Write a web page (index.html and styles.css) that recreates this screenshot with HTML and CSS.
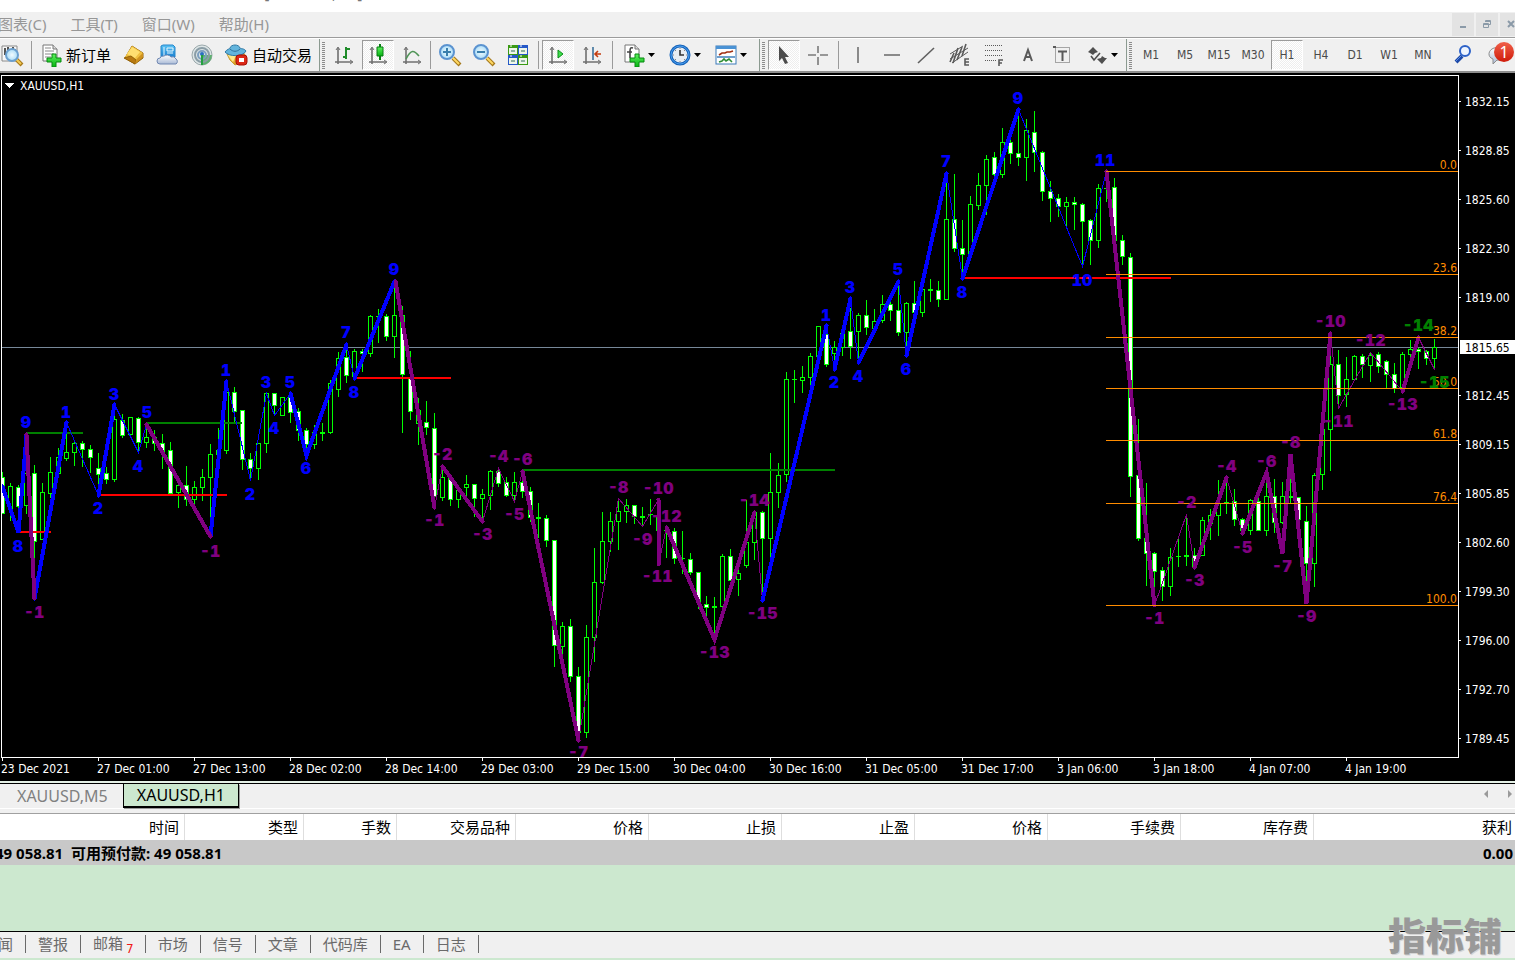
FILE: index.html
```html
<!DOCTYPE html>
<html lang="zh-CN">
<head>
<meta charset="utf-8">
<title>XAUUSD,H1</title>
<link rel="stylesheet" href="styles.css">
</head>
<body>
<svg class="defs" aria-hidden="true">
  <defs>
    <linearGradient id="gold" x1="0" y1="0" x2="1" y2="1"><stop offset="0" stop-color="#ffe98a"/><stop offset=".5" stop-color="#e9b437"/><stop offset="1" stop-color="#a86a08"/></linearGradient>
    <linearGradient id="sky" x1="0" y1="0" x2="0" y2="1"><stop offset="0" stop-color="#5cc4f5"/><stop offset="1" stop-color="#1a7fd0"/></linearGradient>
    <linearGradient id="cloud" x1="0" y1="0" x2="0" y2="1"><stop offset="0" stop-color="#ffffff"/><stop offset="1" stop-color="#a9bad6"/></linearGradient>
    <linearGradient id="green" x1="0" y1="0" x2="0" y2="1"><stop offset="0" stop-color="#5ef25e"/><stop offset="1" stop-color="#06b312"/></linearGradient>
    <radialGradient id="lens"><stop offset="0" stop-color="#f2fbff"/><stop offset="1" stop-color="#a9dcf7"/></radialGradient>
    <g id="axes" fill="none" stroke="#707070"><path d="M6 5v16M3 19h17" stroke-width="1.600"/><path d="M4 7l2-3 2 3M18 17l3 2-3 2"/></g>
    <path id="plus" d="M12 11h4v4h5v4h-5v5h-4v-5H7v-4h5z" fill="url(#green)" stroke="#078a10"/>
    <path id="caret" d="M0 0h7L3.500 4z" fill="#000"/>
  </defs>
</svg>

<header>
  <div class="caption">[XAUUSD,H1]</div>
  <nav class="menubar">
    <button>图表(C)</button><button>工具(T)</button><button>窗口(W)</button><button>帮助(H)</button>
    <div class="winbtns">
      <button aria-label="最小化"><svg width="10" height="10"><path d="M2 8h6" stroke="#8b9aa8" stroke-width="2"/></svg></button>
      <button aria-label="还原"><svg width="10" height="10" fill="none" stroke="#8b9aa8"><path d="M3.500 3V1.500h5v4H7M3.500 2.500h5M1.500 4.500h5v4h-5zM1.500 5.500h5"/></svg></button>
      <button aria-label="关闭"><svg width="10" height="10"><path d="M2 2l6 6M8 2L2 8" stroke="#8b9aa8" stroke-width="2"/></svg></button>
    </div>
  </nav>
</header>

<div class="toolbar" role="toolbar">
  <button class="tb first" aria-label="查找图表"><svg viewBox="0 0 24 24"><path d="M2 3h15v15H2z" fill="#f8f8f8" stroke="#8a8a8a"/><path d="M5 5v7M8 4v5M13 4v8M15 6v3" stroke="#555" stroke-width="2"/><path d="M16 16l6 6" stroke="#a97a1b" stroke-width="4"/><path d="M16 16l5 5" stroke="#f4cc55" stroke-width="2"/><circle cx="12" cy="12" r="6" fill="url(#lens)" stroke="#6ba0d0" stroke-width="2"/></svg></button>
  <i class="sep s1"></i>
  <button class="tb order"><svg viewBox="0 0 24 24"><path d="M3 2h10l4 4v12H3z" fill="#fff" stroke="#777"/><path d="M13 2v4h4" fill="#ddd" stroke="#777"/><path d="M5 5h6M5 8h9M5 11h9M5 14h6" stroke="#888"/><use href="#plus"/></svg>新订单</button>
  <button class="tb" aria-label="市场"><svg viewBox="0 0 24 24"><path d="M3 15L10 3l11 7v5l-8 6z" fill="url(#gold)" stroke="#94640a"/><path d="M3 14L10 3l11 7-7 7-4-3z" fill="#f0c040"/><path d="M5 11l5-7 8 5-5 6z" fill="#ffdf70"/><path d="M2 15l7-2 5 4-1 4z" fill="#b97a12" stroke="#94640a"/><path d="M14 17l7-7v4l-8 7z" fill="#cf9220"/></svg></button>
  <button class="tb" aria-label="云主机"><svg viewBox="0 0 24 24"><path d="M5 3l2-1h10l2 2v10H5z" fill="url(#sky)" stroke="#2687cc"/><path d="M8 4v9M11 5h6v3h-6zM11 10h6" fill="none" stroke="#e6f7ff"/><path d="M4 21a3 3 0 0 1 0-6 4 4 0 0 1 4-2 5 5 0 0 1 7 1 4 4 0 0 1 5 2 3 3 0 0 1 0 5z" fill="url(#cloud)" stroke="#7188b2"/></svg></button>
  <button class="tb" aria-label="信号"><svg viewBox="0 0 24 24" fill="none"><circle cx="12" cy="12" r="10" fill="#dde5e6" stroke="#9aa8ab"/><path d="M12 12l10 0a10 10 0 0 1-9 10z" fill="#5fb070"/><circle cx="12" cy="12" r="7" stroke="#8a9da6" stroke-width="2"/><circle cx="12" cy="12" r="4" stroke="#7d9fc0" stroke-width="2"/><circle cx="12" cy="11" r="2" fill="#2b6fc0"/><path d="M12 12v10" stroke="#23a040" stroke-width="2"/></svg></button>
  <button class="tb auto"><svg viewBox="0 0 24 24"><path d="M3 11h18l-4 8-6 3-5-5z" fill="url(#gold)" stroke="#c99a2c"/><path d="M4 12h8l-3 7z" fill="#ffe98a"/><path d="M1 9c2-3 5-3 5-4 1-4 9-4 10 0 0 1 4 0 6 3-3 6-17 6-21 1z" fill="#62b4dc" stroke="#3079a5"/><path d="M6 6c3 3 7 3 10 0" fill="none" stroke="#2d6f99"/><rect x="12" y="12" width="11" height="10" rx="3" fill="#dc2816" stroke="#a80e04"/><rect x="15" y="15" width="5" height="4" fill="#fff"/></svg>自动交易</button>
  <i class="tail"></i>

  <button class="tb" aria-label="柱状图"><svg viewBox="0 0 24 24"><use href="#axes"/><path d="M14 4v12M14 6h4M11 14h3" stroke="#1f8c2a" stroke-width="2"/></svg></button>
  <button class="tb on" aria-label="蜡烛图"><svg viewBox="0 0 24 24"><use href="#axes"/><path d="M14 1v16" stroke="#067d12" stroke-width="2"/><path d="M11 4h6v9h-6z" fill="url(#green)" stroke="#067d12"/></svg></button>
  <button class="tb" aria-label="折线图"><svg viewBox="0 0 24 24"><use href="#axes"/><path d="M6 16c5-10 8-9 13-3" fill="none" stroke="#4f9456" stroke-width="1.600"/></svg></button>
  <i class="sep s2"></i>
  <button class="tb" aria-label="放大"><svg viewBox="0 0 24 24"><path d="M15 15l7 7" stroke="#a5791c" stroke-width="4"/><path d="M15 15l6 6" stroke="#ffd964" stroke-width="2"/><circle cx="9" cy="9" r="7" fill="url(#lens)" stroke="#5b93d0" stroke-width="2"/><path d="M9 5v8M5 9h8" stroke="#3a7fad" stroke-width="2"/></svg></button>
  <button class="tb" aria-label="缩小"><svg viewBox="0 0 24 24"><path d="M15 15l7 7" stroke="#a5791c" stroke-width="4"/><path d="M15 15l6 6" stroke="#ffd964" stroke-width="2"/><circle cx="9" cy="9" r="7" fill="url(#lens)" stroke="#5b93d0" stroke-width="2"/><path d="M5 9h8" stroke="#3a7fad" stroke-width="2"/></svg></button>
  <button class="tb" aria-label="平铺窗口"><svg viewBox="0 0 24 24"><path d="M2 2h10v10H2zM12 12h10v10H12z" fill="#3a9a14"/><path d="M12 2h10v10H12zM2 12h10v10H2z" fill="#2559c8"/><path d="M3 5h8v6H3zM13 5h8v6h-8zM3 15h8v6H3zM13 15h8v6h-8z" fill="#eef6ea"/><path d="M4 3h2M14 3h2M4 13h2M14 13h2" stroke="#fff"/><path d="M5 8h4M15 8h4M5 18h4M15 18h4" stroke="#8fb0a0" stroke-width="2"/></svg></button>
  <i class="sep s3"></i>
  <button class="tb on" aria-label="自动滚动"><svg viewBox="0 0 24 24"><use href="#axes"/><path d="M12 7l5 4-5 4z" fill="#3de04b" stroke="#0a8c18"/></svg></button>
  <button class="tb" aria-label="图表平移"><svg viewBox="0 0 24 24"><use href="#axes"/><path d="M13 4v13" stroke="#3b719b" stroke-width="1.600"/><path d="M15 11h6M18 8l-3 3 3 3" fill="none" stroke="#c33c10" stroke-width="1.600"/></svg></button>
  <i class="sep s3"></i>
  <button class="tb drop" aria-label="指标"><svg viewBox="0 0 24 24"><path d="M3 2h10l4 4v13H3z" fill="#fff" stroke="#777"/><path d="M13 2v4h4" fill="#ddd" stroke="#777"/><path d="M11 5c-3-1-3 1-3 4v6M5 9h5" fill="none" stroke="#444" stroke-width="1.600"/><use href="#plus" x="1"/></svg><svg class="car" viewBox="0 0 7 4"><use href="#caret"/></svg></button>
  <button class="tb drop" aria-label="周期"><svg viewBox="0 0 24 24"><circle cx="12" cy="12" r="9" fill="#e8edf2" stroke="#1763b9" stroke-width="3"/><circle cx="12" cy="12" r="9" fill="none" stroke="#4a9ff0"/><path d="M12 7v5h4" fill="none" stroke="#333" stroke-width="1.600"/><path d="M12 5v1M12 18v1M5 12h1M18 12h1M7 7l1 1M17 7l-1 1M7 17l1-1M17 17l-1-1" stroke="#888"/></svg><svg class="car" viewBox="0 0 7 4"><use href="#caret"/></svg></button>
  <button class="tb drop" aria-label="模板"><svg viewBox="0 0 24 24"><rect x="2" y="3" width="20" height="18" fill="#fff" stroke="#3a7ab8"/><path d="M2 3h20v3H2z" fill="#4a92d4"/><path d="M3 14h18" stroke="#4a86be" stroke-width="1.600"/><path d="M5 12l3-2h3l2-1h3l3-1" fill="none" stroke="#a33113" stroke-width="1.600"/><path d="M5 19l3-1 2-2 2 2 3-2 3 3" fill="none" stroke="#2e8d35" stroke-width="1.600"/></svg><svg class="car" viewBox="0 0 7 4"><use href="#caret"/></svg></button>
  <i class="tail gap"></i>

  <button class="tb on" aria-label="光标"><svg viewBox="0 0 24 24"><path d="M7 3v15l3-3 3 6 3-1-3-6h4z" fill="#4c4c4c"/></svg></button>
  <button class="tb" aria-label="十字准线"><svg viewBox="0 0 24 24"><path d="M12 3v7M12 14v8M2 12h8M14 12h8" stroke="#7a7a7a" stroke-width="1.600"/></svg></button>
  <i class="sep s3"></i>
  <button class="tb" aria-label="垂直线"><svg viewBox="0 0 24 24"><path d="M12 4v16" stroke="#707070" stroke-width="1.600"/></svg></button>
  <button class="tb" aria-label="水平线"><svg viewBox="0 0 24 24"><path d="M4 12h16" stroke="#707070" stroke-width="1.600"/></svg></button>
  <button class="tb" aria-label="趋势线"><svg viewBox="0 0 24 24"><path d="M4 20L20 5" stroke="#606060" stroke-width="1.600"/></svg></button>
  <button class="tb" aria-label="等距通道"><svg viewBox="0 0 24 24" fill="none" stroke="#5a5a5a"><path d="M2 11L15 3M2 16L20 5M4 20L20 9"/><path d="M5 20l5-15M9 17l5-13M14 13l4-12M2 19l4-9" stroke-width="1.600"/><path d="M21 16h-4v6h4M17 19h4" stroke-width="1.600"/></svg></button>
  <button class="tb" aria-label="斐波那契"><svg viewBox="0 0 24 24" fill="none" stroke="#5a5a5a"><path d="M3 2.500h18M3 7.500h18M3 12.500h18M3 17.500h12" stroke-dasharray="1 1"/><path d="M21 17h-4v6M17 20h3" stroke-width="1.600"/></svg></button>
  <button class="tb" aria-label="文本"><svg viewBox="0 0 24 24"><path d="M8 18l4-11 4 11M9 14h6" fill="none" stroke="#5a5a5a" stroke-width="2"/></svg></button>
  <button class="tb" aria-label="文本标签"><svg viewBox="0 0 24 24" fill="none" stroke="#5a5a5a"><path d="M5.500 4.500h14v15h-14z" stroke-dasharray="1 1"/><path d="M3 3h3v2H3z" fill="#5a5a5a" stroke="none"/><path d="M8 8.500h9M12.500 8v10" stroke-width="2"/></svg></button>
  <button class="tb drop shapes" aria-label="箭头"><svg viewBox="0 0 24 24"><path d="M3 9l5-5 5 5-3 1-2 2-3-2zM12 16l4-1 1-2 3 2h2l-5 6z" fill="#4f4f4f"/><path d="M6 13l3 4 6-7" fill="none" stroke="#4f4f4f" stroke-width="1.600"/></svg><svg class="car" viewBox="0 0 7 4"><use href="#caret"/></svg></button>
  <i class="tail"></i>

  <button class="tb tf">M1</button><button class="tb tf">M5</button><button class="tb tf">M15</button><button class="tb tf">M30</button><button class="tb tf on">H1</button><button class="tb tf">H4</button><button class="tb tf">D1</button><button class="tb tf">W1</button><button class="tb tf">MN</button>
  <button class="tb search" aria-label="搜索"><svg viewBox="0 0 24 24"><path d="M11 13l-6 6" stroke="#1c49a8" stroke-width="4"/><path d="M10 13l-5 5" stroke="#5d8fe8"/><circle cx="14" cy="8" r="5" fill="#eef5ff" stroke="#2d62c8" stroke-width="2"/></svg></button>
  <button class="tb chat" aria-label="消息"><svg viewBox="0 0 24 24"><path d="M8 5c9-2 14 2 13 7-1 4-6 6-10 5l-4 4v-5c-6-2-5-9 1-11z" fill="url(#cloud)" stroke="#8d8d8d"/></svg><span class="count">1</span></button>
</div>

<main class="chart">
  <svg id="chart" viewBox="0 73 1515 708" role="img" aria-label="XAUUSD,H1"></svg>
</main>

<nav class="charttabs">
  <button>XAUUSD,M5</button><button class="active">XAUUSD,H1</button>
  <div class="scroll">
    <button aria-label="向左"><svg width="6" height="8"><path d="M5 0v8L1 4z" fill="#9a9a9a"/></svg></button>
    <button aria-label="向右"><svg width="6" height="8"><path d="M1 0v8l4-4z" fill="#9a9a9a"/></svg></button>
  </div>
</nav>

<section class="terminal">
  <table>
    <colgroup><col class="c185"><col class="c119"><col class="c93"><col class="c119"><col class="c133"><col class="c133"><col class="c133"><col class="c133"><col class="c133"><col class="c133"><col></colgroup>
    <thead><tr><th>时间</th><th>类型</th><th>手数</th><th>交易品种</th><th>价格</th><th>止损</th><th>止盈</th><th>价格</th><th>手续费</th><th>库存费</th><th>获利</th></tr></thead>
    <tbody><tr><td colspan="10"><span>49 058.81&nbsp; 可用预付款: 49 058.81</span></td><td class="profit">0.00</td></tr></tbody>
  </table>
</section>
<footer>
  <button>新闻</button><button>警报</button><button class="mail">邮箱<sub>7</sub></button><button>市场</button><button>信号</button><button>文章</button><button>代码库</button><button>EA</button><button>日志</button>
  <span class="brand">指标铺</span>
</footer>
<script src="chart.js"></script>
</body>
</html>
```
FILE: styles.css
```css
* { box-sizing: border-box; }
html, body { height: 100%; }
body {
  margin: 0;
  display: flex;
  flex-direction: column;
  background: #f0f0f0;
  font: 15px/20px "Noto Sans", "Noto Sans CJK SC", sans-serif;
  overflow-x: hidden;
}
button {
  margin: 0;
  padding: 0;
  border: 0;
  background: none;
  font: inherit;
  color: inherit;
  white-space: nowrap;
}
.defs { position: absolute; width: 0; height: 0; }

.caption {
  height: 12px;
  padding: 0 0 9px 264px;
  display: flex;
  align-items: flex-end;
  background: #fff;
  color: #777;
  font-size: 16px;
  overflow: hidden;
}

.menubar {
  height: 26px;
  padding-bottom: 1px;
  display: flex;
  align-items: center;
  gap: 24px;
  border-bottom: 1px solid #9c9c9c;
  color: #979797;
  overflow: hidden;
}
.menubar > button:first-child { margin-left: -2px; }
.winbtns { margin-left: auto; display: flex; gap: 2px; margin-right: -7px; }
.winbtns button {
  width: 22px;
  height: 23px;
  background: #e3e3e3;
  display: grid;
  place-items: center;
}

.toolbar {
  height: 35px;
  flex: none;
  display: flex;
  align-items: center;
  border-top: 1px solid #fff;
  border-bottom: 2px solid #8e8e8e;
  overflow: hidden;
}
.tb {
  flex: none;
  width: 34px;
  height: 32px;
  display: flex;
  align-items: center;
  justify-content: center;
  border: 1px solid transparent;
}
.tb svg { width: 24px; height: 24px; flex: none; }
.tb.first { width: 24px; }
.tb.order { width: 85px; justify-content: flex-start; padding-left: 7px; gap: 2px; }
.tb.auto { width: 100px; justify-content: flex-start; padding-left: 4px; gap: 4px; }
.tb.drop { width: 46px; justify-content: flex-start; padding-left: 6px; gap: 2px; }
.tb.shapes { width: 47px; padding-left: 5px; }
.tb svg.car { width: 7px; height: 4px; }
.tb.on {
  width: 32px;
  height: 30px;
  margin: 0 1px;
  border-color: #9a9a9a #fff #fff #9a9a9a;
  background: repeating-conic-gradient(#fff 0 25%, #eee 0 50%) 0 0 / 2px 2px;
}
.tb.tf { font-family: "DejaVu Sans Condensed", "DejaVu Sans", sans-serif; font-size: 12px; color: #4a4a4a; }
.sep { flex: none; height: 28px; width: 1px; background: #9a9a9a; }
.s1 { margin-left: 7px; }
.s2 { margin: 0 2px 0 1px; }
.s3 { margin: 0 2px 0 3px; }
.tail {
  flex: none;
  width: 8px;
  height: 32px;
  border-left: 1px solid #8b9a90;
  background: repeating-linear-gradient(#8c8c8c 0 1px, #f0f0f0 1px 2px) 2px 3px / 3px 27px no-repeat;
}
.tail.gap { margin-left: 6px; }
.tb.search { margin-left: 6px; }
.tb.chat { width: 35px; position: relative; }
.count {
  position: absolute;
  left: 13px;
  top: 2px;
  width: 20px;
  height: 20px;
  border-radius: 50%;
  background: linear-gradient(#f0604a, #cf1b0a);
  color: #fff;
  font: 16px/20px "Noto Sans", sans-serif;
  text-align: center;
}

.chart { background: #000; flex: none; }
.chart svg { display: block; width: 100%; height: auto; }
.chart text { font: 12px "DejaVu Sans Condensed", "DejaVu Sans", sans-serif; fill: #fff; }
.chart .fib { fill: #ff8c00; text-anchor: end; }
.chart .wave {
  font: 900 16px Inter, "DejaVu Sans", sans-serif;
  font-variant-numeric: tabular-nums;
  text-anchor: middle;
}
.chart .now { fill: #000; }

.charttabs {
  flex: none;
  height: 31px;
  margin-top: 2px;
  border-top: 1px solid #000;
  border-bottom: 1px solid #a0a0a0;
  box-shadow: inset 0 -4px #f0f0f0, inset 0 -5px #fff, 0 -2px #e4f0e6;
  display: flex;
  align-items: flex-start;
  color: #808080;
  font-size: 16px;
}
.charttabs > button { height: 24px; padding: 0 15px 0 17px; }
.charttabs > .active {
  padding: 0 13px;
  border: 1px solid #000;
  border-top: 0;
  border-bottom-width: 2px;
  background: #cce8cf;
  color: #000;
  box-shadow: 1px 1px #999;
}
.scroll { margin: 6px 2px 0 auto; display: flex; gap: 18px; }
.scroll button { display: flex; }

.terminal { flex: 1 0 90px; background: #cce8cf; overflow: hidden; }
table { width: 100%; table-layout: fixed; border-collapse: separate; border-spacing: 0; }
.c185 { width: 185px; } .c119 { width: 119px; } .c93 { width: 93px; } .c133 { width: 133px; }
th {
  height: 26px;
  padding: 0 5px;
  text-align: right;
  font-weight: 400;
  background: #fff;
  border-right: 1px solid #dedede;
}
th:last-child { border: 0; padding-right: 3px; }
td { height: 25px; padding: 0; background: #c8c8c8; font-weight: 700; white-space: nowrap; }
td span { margin-left: -5px; }
td.profit { text-align: right; padding-right: 2px; }

footer {
  flex: none;
  position: relative;
  height: 29px;
  padding-top: 3px;
  display: flex;
  align-items: flex-start;
  border-top: 1px solid #000;
  border-bottom: 2px solid #cce8cf;
  color: #6a6a6a;
}
footer button { height: 18px; line-height: 16px; padding: 0 12px; border-right: 1px solid #6a6a6a; }
footer button:first-child { margin-left: -29px; }
footer .mail { padding-right: 11px; }
footer sub { color: #f01818; font: 12px/12px "DejaVu Sans", sans-serif; margin-left: 3px; }
.brand {
  position: absolute;
  right: 13px;
  bottom: 4px;
  font: 900 38px/40px "Noto Sans CJK SC", sans-serif;
  color: #999;
  text-shadow: 1px 1px #d5d5d5;
}
```
FILE: chart.js
```js
// Each bar: [high, low, body top, body bottom, kind]; kind: 1 = falling, 0 = rising, 2 = flat
const bars = [
[472,513,477,513,1],[483,520,486,508,0],[485,510,487,506,1],[440,513,473,505,0],[465,557,473,541,1],[483,539,492,539,0],[457,497,472,493,0],[448,473,457,473,0],[433,460,452,458,0],[441,465,443,452,0],
[441,466,443,449,1],[445,472,449,457,1],[453,495,468,474,1],[467,483,473,479,1],[404,481,419,479,0],[414,437,420,435,1],[417,434,417,434,0],[417,452,418,442,1],[425,447,437,442,0],[430,450,437,443,1],
[434,468,443,452,1],[442,494,450,493,1],[483,507,485,492,0],[466,505,485,499,1],[481,505,487,499,0],[469,500,477,487,0],[444,536,454,477,0],[428,454,450,454,0],[381,453,392,450,0],[387,422,392,411,1],
[410,469,410,459,1],[453,479,459,468,1],[443,479,443,468,0],[393,452,393,443,0],[393,415,393,405,1],[397,415,397,415,0],[393,422,397,412,1],[408,440,411,430,1],[428,450,430,444,1],[425,448,432,444,0],
[423,440,432,433,2],[380,433,383,432,0],[352,396,358,389,0],[347,382,357,375,1],[349,376,351,376,0],[349,371,351,353,1],[315,356,316,353,0],[309,342,316,316,2],[314,340,316,336,1],[283,357,315,336,0],
[306,432,315,374,1],[351,419,378,411,1],[398,444,410,423,0],[401,434,422,427,1],[413,500,428,496,1],[465,500,477,497,0],[475,505,477,499,1],[490,507,490,499,0],[475,495,484,487,0],[484,516,484,498,1],
[489,518,494,498,0],[470,509,471,495,0],[468,486,471,483,1],[477,496,482,495,1],[472,500,482,495,0],[472,497,482,491,1],[487,521,491,517,1],[503,537,517,518,2],[515,546,518,540,1],[540,666,540,645,1],
[622,653,626,646,0],[619,681,626,676,1],[667,740,676,732,1],[625,737,637,732,0],[548,661,582,637,0],[512,583,541,582,0],[512,551,521,541,0],[499,549,511,521,0],[499,522,505,511,0],[505,523,505,516,1],
[507,526,516,517,2],[499,524,514,514,2],[499,562,515,530,1],[527,557,530,530,2],[528,563,531,558,1],[531,573,558,558,2],[553,574,559,572,1],[572,608,572,602,1],[596,616,604,607,1],[597,632,606,607,2],
[554,606,556,606,0],[549,580,556,580,1],[564,595,573,579,0],[500,567,542,565,0],[512,559,512,542,0],[511,600,512,538,1],[453,557,492,538,0],[463,507,475,492,0],[372,481,379,474,0],[370,402,379,379,2],
[366,392,377,380,0],[353,385,356,377,0],[326,356,326,356,0],[325,366,334,364,1],[341,360,347,353,0],[330,355,333,347,0],[308,358,331,346,1],[313,358,315,331,0],[300,334,315,327,1],[309,328,321,328,0],
[295,322,304,320,0],[299,320,304,310,1],[285,335,310,332,1],[302,350,303,332,0],[281,313,303,312,1],[289,316,289,312,0],[279,301,289,290,2],[281,306,290,299,1],[180,299,219,299,0],[174,251,219,248,1],
[220,272,248,254,1],[196,253,204,253,0],[173,209,185,205,0],[155,214,159,185,0],[152,175,157,174,1],[128,177,142,174,0],[140,163,142,153,1],[116,165,153,157,1],[119,180,130,157,0],[111,171,132,152,1],
[151,200,152,191,1],[181,221,191,198,1],[194,216,198,206,1],[197,227,202,206,0],[197,229,202,204,1],[203,265,204,221,1],[219,264,220,240,1],[184,247,188,240,0],[180,201,188,188,2],[178,241,187,240,1],
[235,264,240,256,1],[253,496,257,476,1],[419,540,475,538,1],[483,585,538,553,1],[552,603,553,571,1],[567,600,570,586,1],[548,595,557,586,0],[538,566,556,556,2],[517,565,555,556,2],[548,568,555,567,1],
[517,555,520,555,0],[509,539,515,523,0],[480,535,503,515,0],[483,513,502,503,2],[489,525,501,519,1],[518,530,519,530,1],[499,534,500,530,0],[498,530,501,530,1],[478,535,496,530,0],[479,532,496,522,1],
[482,523,496,522,0],[479,503,496,497,2],[497,519,497,519,1],[506,580,521,563,1],[473,586,475,563,0],[429,489,429,474,0],[340,470,364,429,0],[350,403,364,395,1],[357,406,379,394,0],[355,380,356,379,0],
[354,377,356,364,1],[352,381,355,365,0],[352,372,354,366,1],[360,388,361,374,1],[363,392,374,388,1],[352,387,354,387,0],[340,360,349,354,0],[348,368,349,351,1],[350,364,351,358,1],[339,368,347,358,0]
];

const blue = '#0000ff', purple = '#800080', darkGreen = '#008000';

// [x1, y, x2, color]
const levels = [
  [26,433,83,darkGreen],[146,423,242,darkGreen],[522,470,835,darkGreen],
  [18,532,51,'#ff0000'],[98,495,227,'#ff0000'],[354,378,451,'#ff0000'],[962,278,1171,'#ff0000']
];
const thin = [
  [blue,'66,422 98,495'],[blue,'114,404 138,452 146,424'],[blue,'226,381 250,480 266,393 274,415 290,393'],[blue,'346,344 354,378'],
  [blue,'826,325 834,369'],[blue,'850,298 858,362'],[blue,'898,280 906,355'],[blue,'946,173 962,278'],[blue,'1018,109 1082,266 1106,171'],
  [purple,'434,507 442,466'],[purple,'482,521 498,468 514,501 522,471'],[purple,'578,740 618,498 642,526 658,499'],[purple,'658,564 666,527'],
  [purple,'754,512 762,600'],[purple,'1154,605 1186,514 1194,567'],[purple,'1226,477 1242,533'],[purple,'1330,333 1338,408 1370,352 1402,391'],[purple,'1418,337 1434,369']
];
const thick = [
  [blue,'2,486 18,532 26,434'],[blue,'34,598 66,422'],[blue,'98,495 114,404'],[blue,'210,536 226,381'],[blue,'290,393 306,455 346,344'],[blue,'354,378 394,281'],
  [blue,'762,600 826,325'],[blue,'834,369 850,298'],[blue,'858,362 898,281'],[blue,'906,355 946,173'],[blue,'962,278 1018,109'],
  [purple,'26,434 34,598'],[purple,'146,424 210,536'],[purple,'395,281 434,507'],[purple,'442,466 482,521'],[purple,'522,471 578,740'],[purple,'658,499 658,564'],
  [purple,'666,527 714,639 754,512'],[purple,'1106,171 1154,605'],[purple,'1194,567 1226,477'],[purple,'1242,533 1266,472 1282,553 1290,454 1306,603 1330,333'],[purple,'1402,391 1418,337']
];
const waves = [
  [blue,'9,26,422 1,66,412 8,18,546 3,114,394 5,147,412 2,98,508 4,138,466 1,226,370 2,250,494 3,266,382 5,290,382 4,274,428 6,306,468 7,346,332 8,354,392 9,394,269 1,826,315 3,850,287 2,834,382 4,858,376 5,898,269 6,906,369 7,946,161 8,962,292 9,1018,98 10,1082,280 11,1105,160'],
  [purple,'-1,34,612 -1,210,551 -1,434,520 -2,442,454 -3,482,534 -4,498,456 -5,514,514 -6,522,459 -7,578,752 -8,618,487 -9,642,539 -10,658,488 -11,657,576 -12,666,516 -13,714,652 -14,754,500 -15,762,613 -1,1154,618 -2,1186,502 -3,1194,580 -4,1226,466 -5,1242,547 -6,1266,461 -7,1282,566 -8,1290,442 -9,1306,616 -10,1330,321 -11,1338,421 -12,1370,340 -13,1402,404'],
  [darkGreen,'-14,1418,325 -15,1434,382']
];
const fibs = [[171,'0.0'],[274,'23.6'],[337,'38.2'],[388,'50.0'],[440,'61.8'],[503,'76.4'],[605,'100.0']];
const prices = ['1832.15','1828.85','1825.60','1822.30','1819.00','','1812.45','1809.15','1805.85','1802.60','1799.30','1796.00','1792.70','1789.45'];
const times = ['23 Dec 2021','27 Dec 01:00','27 Dec 13:00','28 Dec 02:00','28 Dec 14:00','29 Dec 03:00','29 Dec 15:00','30 Dec 04:00','30 Dec 16:00','31 Dec 05:00','31 Dec 17:00','3 Jan 06:00','3 Jan 18:00','4 Jan 07:00','4 Jan 19:00'];

const out = ['<defs><clipPath id="plot"><path d="M2 76h1456v681H2z"/></clipPath></defs>'];
const rect = (x, y, w, h, fill) => `<rect x="${x}" y="${y}" width="${w}" height="${h}" fill="${fill}"/>`;
const poly = (c, pts, w) => `<polyline points="${pts}" fill="none" stroke="${c}" stroke-width="${w}" stroke-linecap="round"/>`;

out.push('<g shape-rendering="crispEdges" clip-path="url(#plot)">');
out.push(rect(2, 347, 1456, 1, '#778899'));
bars.forEach(([hi, lo, top, bot, kind], i) => {
  const x = 8 * i;
  out.push(rect(x + 2, hi, 1, lo - hi + 1, '#00ff00'));
  out.push(rect(x, top, 5, bot - top + 1, '#00ff00'));
  if (kind !== 2 && bot - top > 1) out.push(rect(x + 1, top + 1, 3, bot - top - 1, kind ? '#ffffff' : '#000000'));
});
levels.forEach(([x1, y, x2, c]) => out.push(rect(x1, y - 1, x2 - x1, 2, c)));
// Wave lines run through the middle of each bar's pixel column
out.push('<g transform="translate(.5 .5)">');
thin.forEach(([c, p]) => out.push(poly(c, p, 1)));
thick.forEach(([c, p]) => out.push(poly(c, p, 4)));
out.push('</g>');
fibs.forEach(([y]) => out.push(rect(1106, y, 352, 1, '#ff8c00')));
out.push('</g><g clip-path="url(#plot)">');
fibs.forEach(([y, t]) => out.push(`<text class="fib" x="1457" y="${y - 2}">${t}</text>`));
waves.forEach(([c, list]) => list.split(' ').forEach(item => {
  const [t, x, y] = item.split(',');
  out.push(`<text class="wave" style="fill:${c}" x="${x}" y="${+y + 6}">${t}</text>`);
}));
out.push('</g><g shape-rendering="crispEdges">');
out.push(rect(1, 75, 1458, 1, '#fff'), rect(1, 75, 1, 683, '#fff'), rect(1458, 75, 1, 683, '#fff'), rect(1, 757, 1458, 1, '#fff'));
prices.forEach((p, i) => { if (p) out.push(rect(1459, 101 + 49 * i, 2, 1, '#fff')); });
times.forEach((t, i) => out.push(rect(2 + 96 * i, 758, 1, 3, '#fff')));
out.push(rect(1460, 340, 55, 14, '#fff'), '<path d="M5 83h9l-4 5h-1z" fill="#fff"/></g>');
out.push('<text x="20" y="90">XAUUSD,H1</text>');
prices.forEach((p, i) => { if (p) out.push(`<text x="1465" y="${106 + 49 * i}">${p}</text>`); });
out.push('<text class="now" x="1465" y="352">1815.65</text>');
times.forEach((t, i) => out.push(`<text x="${1 + 96 * i}" y="773">${t}</text>`));
document.getElementById('chart').innerHTML = out.join('');
```
